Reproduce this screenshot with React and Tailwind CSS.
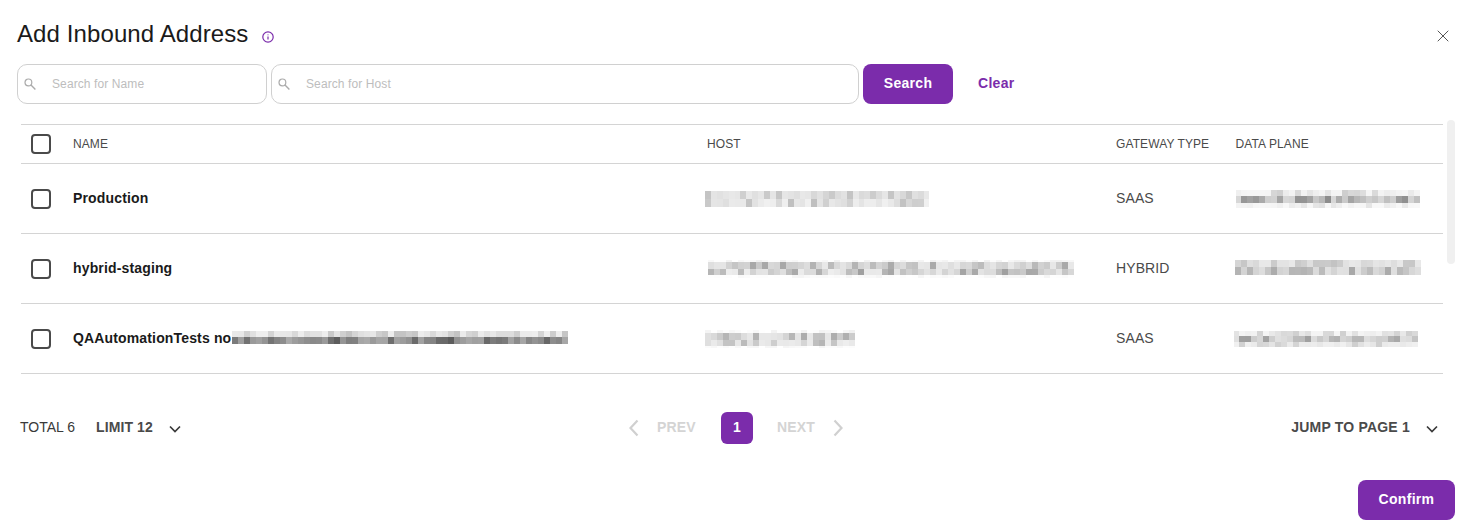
import { X } from 'lucide-react'

// seeded so the redacted blocks stay the same between renders
function shade(seed, i, r) {
  const x = Math.sin(seed * 91.7 + i * 12.9898 + r * 78.233) * 43758.5453
  return x - Math.floor(x)
}

function Redacted({ seed, cols, rows, cellW = 6 }) {
  return (
    <div className="flex flex-col">
      {rows.map(([h, light, dark], r) => (
        <div key={r} className="flex" style={{ height: h }}>
          {Array.from({ length: cols }).map((_, i) => {
            const g = Math.round(light - (light - dark) * Math.pow(shade(seed, i, r), 1.8))
            return <div key={i} style={{ width: cellW, background: `rgb(${g},${g},${g})` }} />
          })}
        </div>
      ))}
    </div>
  )
}

function Checkbox() {
  return <div className="w-5 h-5 rounded-[4px] border-2 border-[#4a4a4a] bg-white" />
}

function SearchIcon() {
  return (
    <svg width="12" height="12" viewBox="0 0 12 12" fill="none" className="ml-[6px] shrink-0 text-[#ababab]">
      <circle cx="4.4" cy="4.4" r="3.4" stroke="currentColor" strokeWidth="1.2" />
      <path d="M7 7L11.4 11.4" stroke="currentColor" strokeWidth="1.4" />
    </svg>
  )
}

function Caret({ className = '' }) {
  return (
    <svg width="12" height="8" viewBox="0 0 12 8" fill="none" className={`mt-[2px] text-[#3a3a3a] ${className}`}>
      <path d="M1 1.5L6 6.5L11 1.5" stroke="currentColor" strokeWidth="1.7" />
    </svg>
  )
}

function PageArrow({ flip = false, className = '' }) {
  return (
    <svg width="10" height="18" viewBox="0 0 10 18" fill="none" className={`text-[#d0d0d0] ${className}`}>
      <path d={flip ? 'M1.5 1.5L8.5 9L1.5 16.5' : 'M8.5 1.5L1.5 9L8.5 16.5'} stroke="currentColor" strokeWidth="2.2" />
    </svg>
  )
}

function SearchInput({ width, placeholder, textPad }) {
  return (
    <div className={`${width} h-10 flex items-center rounded-[10px] border border-[#d0d0d0] bg-white`}>
      <SearchIcon />
      <span className={`${textPad} text-xs tracking-[0.1px] text-[#bdbdbd]`}>{placeholder}</span>
    </div>
  )
}

const ROWS = [
  {
    name: 'Production', type: 'SAAS',
    host: <div className="-ml-[2px]"><Redacted seed={1} cols={38} cellW={5.92} rows={[[8, 232, 195], [8, 240, 190]]} /></div>,
    plane: <Redacted seed={2} cols={31} cellW={5.94} rows={[[6, 245, 205], [7, 215, 130], [5, 248, 225]]} />,
  },
  {
    name: 'hybrid-staging', type: 'HYBRID',
    host: <div className="ml-[1px]"><Redacted seed={3} cols={61} rows={[[2, 255, 240], [7, 232, 165], [6, 238, 160], [3, 255, 245]]} /></div>,
    plane: <div className="-ml-[1px] pb-[2px]"><Redacted seed={4} cols={31} rows={[[7, 232, 195], [8, 225, 165]]} /></div>,
  },
  {
    name: 'QAAutomationTests no', type: 'SAAS', offset: true,
    host: <div className="-ml-[2px]"><Redacted seed={5} cols={25} rows={[[3, 255, 240], [7, 232, 170], [6, 238, 180], [2, 255, 245]]} /></div>,
    plane: <div className="-ml-[2px]"><Redacted seed={6} cols={31} cellW={5.94} rows={[[5, 245, 205], [6, 225, 150], [5, 240, 205]]} /></div>,
  },
]

export default function App() {
  return (
    <div className="relative w-[1469px] h-[532px] bg-white text-[#1a1a1a] overflow-hidden font-['Liberation_Sans',Arial,sans-serif]">
      <div className="flex items-center h-8 mt-[18px] pl-[17px] pr-[16px]">
        <h1 className="text-2xl leading-8 tracking-[0.1px]">Add Inbound Address</h1>
        <svg width="12" height="12" viewBox="0 0 12 12" fill="none" className="ml-[14px] mt-[6px] text-[#7b2cab]">
          <circle cx="6" cy="6" r="5.2" stroke="currentColor" strokeWidth="1.2" />
          <path d="M6 5.4V8.6M6 3.4V4.3" stroke="currentColor" strokeWidth="1.2" />
        </svg>
        <X size={20} strokeWidth={1} className="ml-auto mt-1 text-[#333]" />
      </div>

      <div className="flex items-center gap-1 mt-[14px] pl-[17px]">
        <SearchInput width="w-[250px]" placeholder="Search for Name" textPad="ml-[16px]" />
        <SearchInput width="w-[588px]" placeholder="Search for Host" textPad="ml-[16px]" />
        <button className="w-[90px] h-10 pb-[2px] rounded-lg bg-[#7b2cab] text-white text-sm font-bold tracking-[0.3px]">Search</button>
        <button className="ml-[21px] pb-[2px] text-sm font-bold text-[#7b2cab] tracking-[0.3px]">Clear</button>
      </div>

      <div className="mt-5 ml-[21px] w-[1422px] border-t border-[#d4d4d4]">
        <div className="flex items-center h-[39px] border-b border-[#d4d4d4] text-xs tracking-[0.1px] text-[#4a4a4a]">
          <div className="w-[52px] pl-[10px]"><Checkbox /></div>
          <div className="w-[634px]">NAME</div>
          <div className="w-[409px]">HOST</div>
          <div className="w-[119.5px]">GATEWAY TYPE</div>
          <div>DATA PLANE</div>
        </div>
        {ROWS.map(row => (
          <div key={row.name} className="flex items-center h-[70px] border-b border-[#d4d4d4]">
            <div className="w-[52px] pl-[10px]"><Checkbox /></div>
            <div className="w-[634px] pb-[2px] flex items-center text-sm font-bold tracking-[0.15px] text-[#1a1a1a]">
              <span>{row.name}</span>
              {row.offset && (
                <div className="-mt-[1px] ml-[1px]">
                  <Redacted seed={7} cols={56} rows={[[6, 238, 195], [7, 170, 90]]} />
                </div>
              )}
            </div>
            <div className="w-[409px]">{row.host}</div>
            <div className="w-[119.5px] pb-[2px] text-sm tracking-[0.1px] text-[#4a4a4a]">{row.type}</div>
            <div>{row.plane}</div>
          </div>
        ))}
      </div>

      <div className="flex items-center justify-between h-8 mt-[38px] pl-5 pr-[31px]">
        <div className="w-[400px] flex items-center text-sm text-[#3a3a3a]">
          <span className="pb-[2px]">TOTAL 6</span>
          <span className="ml-[21px] pb-[2px] font-bold tracking-[0.1px] text-[#4a4a4a]">LIMIT 12</span>
          <Caret className="ml-4" />
        </div>
        <div className="flex items-center text-sm font-bold text-[#d4d4d4] ml-[14px]">
          <PageArrow />
          <span className="ml-[18px] pb-[2px] tracking-[0.2px]">PREV</span>
          <span className="ml-[25px] w-8 h-8 pb-[2px] flex items-center justify-center rounded-md bg-[#7b2cab] text-white">1</span>
          <span className="ml-[24px] pb-[2px] tracking-[0.2px]">NEXT</span>
          <PageArrow flip className="ml-[18px]" />
        </div>
        <div className="w-[400px] flex items-center justify-end text-sm font-bold text-[#4a4a4a]">
          <span className="pb-[2px] tracking-[0.2px]">JUMP TO PAGE 1</span>
          <Caret className="ml-4" />
        </div>
      </div>

      <div className="flex justify-end mt-9 pr-[14px]">
        <button className="w-[97px] h-10 pb-[2px] rounded-lg bg-[#7b2cab] text-white text-sm font-bold tracking-[0.3px]">Confirm</button>
      </div>

      {/* scrollbar thumb floats over the dialog edge */}
      <div className="absolute left-[1447px] top-[120px] w-2 h-[144px] rounded bg-[#f0f0f0]" />
    </div>
  )
}
